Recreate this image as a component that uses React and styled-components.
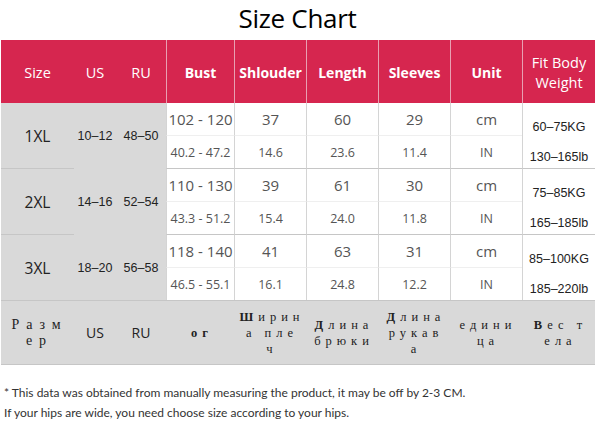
import React from "react";
import styled, { createGlobalStyle } from "styled-components";

const GlobalStyle = createGlobalStyle`
  html, body {
    margin: 0;
    padding: 0;
    background: #ffffff;
  }
`;

const Page = styled.div`
  width: 595px;
  height: 426px;
  overflow: hidden;
  font-family: "Open Sans", "Noto Sans", sans-serif;
`;

const Title = styled.h1`
  margin: 0;
  height: 40px;
  line-height: 36px;
  text-align: center;
  font-size: 26px;
  font-weight: 400;
  color: #000;
  letter-spacing: -0.3px;
`;

const Table = styled.div`
  display: grid;
  margin-left: 1px;
  grid-template-columns: 73px 42px 50px 68px 72px 72px 72px 72px 73px;
  grid-template-rows: 63px repeat(6, 33px) 64px;
`;

const Head = styled.div`
  background: #d6264f;
  color: #fff;
  display: flex;
  align-items: center;
  justify-content: center;
  text-align: center;
  font-size: ${(p) => (p.bold ? "14px" : "14.5px")};
  font-weight: ${(p) => (p.bold ? 700 : 400)};
  line-height: 20px;
  border-left: ${(p) => (p.line ? "1px solid #e8a0b2" : "none")};
  padding-top: 2px;
`;

const SizeCell = styled.div`
  background: #d9d9d9;
  display: flex;
  align-items: center;
  justify-content: center;
  color: #222;
  font-size: ${(p) => (p.big ? "15.5px" : "12.5px")};
  border-bottom: ${(p) => (p.line ? "1px solid #c6c6c6" : "none")};
  font-family: ${(p) => (p.big ? '"Open Sans", sans-serif' : '"Liberation Sans", Arial, sans-serif')};
`;

const Cell = styled.div`
  display: flex;
  align-items: center;
  justify-content: center;
  color: #555;
  font-size: ${(p) => (p.small ? "12.5px" : "15px")};
  border-left: 1px solid #d4d4d4;
  border-bottom: 1px solid ${(p) => (p.end ? "#c6c6c6" : "#efefef")};
  background: #fff;
`;

const WeightCell = styled.div`
  display: flex;
  flex-direction: column;
  justify-content: space-between;
  align-items: center;
  padding: 17px 0 4px;
  border-left: 1px solid #d4d4d4;
  border-bottom: 1px solid #c6c6c6;
  font-family: "Liberation Sans", Arial, sans-serif;
  font-size: 12.5px;
  color: #222;
  background: #fff;
`;

const RuCell = styled.div`
  background: #d9d9d9;
  display: flex;
  flex-direction: column;
  align-items: center;
  justify-content: center;
  color: #222;
  border-bottom: 1px solid #c6c6c6;
  border-top: 1px solid #c6c6c6;
  margin-top: -1px;
  padding-left: ${(p) => (p.plain ? "0" : "4px")};
`;

const RuLine = styled.span`
  display: block;
  white-space: pre;
  text-align: center;
  font-family: ${(p) => (p.plain ? '"Open Sans", sans-serif' : '"Liberation Serif", "DejaVu Serif", serif')};
  font-size: ${(p) => (p.plain ? "14px" : p.big ? "14px" : "12.5px")};
  letter-spacing: ${(p) => (p.plain ? "0" : p.big ? "7px" : "5px")};
  line-height: 16px;
  font-weight: ${(p) => (p.bold ? 700 : 400)};
`;

const Notes = styled.div`
  padding: 18px 0 0 4px;
  font-family: Lato, "Open Sans", sans-serif;
  font-size: 12px;
  color: #333;
  line-height: 20px;
`;

const headers = [
  { t: "Size" },
  { t: "US" },
  { t: "RU" },
  { t: "Bust", bold: true, line: true },
  { t: "Shlouder", bold: true, line: true },
  { t: "Length", bold: true, line: true },
  { t: "Sleeves", bold: true, line: true },
  { t: "Unit", bold: true, line: true },
  { t: "Fit Body Weight", line: true },
];

const rows = [
  {
    size: "1XL", us: "10–12", ru: "48–50",
    cm: ["102 - 120", "37", "60", "29"],
    inch: ["40.2 - 47.2", "14.6", "23.6", "11.4"],
    kg: "60–75KG", lb: "130–165lb",
  },
  {
    size: "2XL", us: "14–16", ru: "52–54",
    cm: ["110 - 130", "39", "61", "30"],
    inch: ["43.3 - 51.2", "15.4", "24.0", "11.8"],
    kg: "75–85KG", lb: "165–185lb",
  },
  {
    size: "3XL", us: "18–20", ru: "56–58",
    cm: ["118 - 140", "41", "63", "31"],
    inch: ["46.5 - 55.1", "16.1", "24.8", "12.2"],
    kg: "85–100KG", lb: "185–220lb",
  },
];

// russian labels, wrapped the same way as in the chart image
const ruLabels = [
  { lines: ["Разм", "ер"], big: true },
  { lines: ["US"], plain: true },
  { lines: ["RU"], plain: true },
  { lines: ["ог"], bold: true },
  { lines: ["Ширин", "а пле", "ч"], cap: true },
  { lines: ["Длина", "брюки"], cap: true },
  { lines: ["Длина", "рукав", "а"], cap: true },
  { lines: ["едини", "ца"] },
  { lines: ["Вес т", "ела"], cap: true },
];

export default function App() {
  return (
    <Page>
      <GlobalStyle />
      <Title>Size Chart</Title>
      <Table>
        {headers.map((h) => (
          <Head key={h.t} bold={h.bold} line={h.line}>
            {h.t === "Fit Body Weight" ? (
              <span>
                Fit Body
                <br />
                Weight
              </span>
            ) : (
              h.t
            )}
          </Head>
        ))}

        {rows.map((r, i) => (
          <React.Fragment key={r.size}>
            <SizeCell big line={i < 2} style={{ gridRow: `${2 + i * 2} / span 2`, gridColumn: 1 }}>
              {r.size}
            </SizeCell>
            <SizeCell style={{ gridRow: `${2 + i * 2} / span 2`, gridColumn: 2 }}>{r.us}</SizeCell>
            <SizeCell style={{ gridRow: `${2 + i * 2} / span 2`, gridColumn: 3 }}>{r.ru}</SizeCell>
            {r.cm.map((v, j) => (
              <Cell key={"c" + j} style={{ gridRow: 2 + i * 2, gridColumn: 4 + j }}>
                {v}
              </Cell>
            ))}
            <Cell style={{ gridRow: 2 + i * 2, gridColumn: 8 }}>cm</Cell>
            {r.inch.map((v, j) => (
              <Cell key={"i" + j} small end style={{ gridRow: 3 + i * 2, gridColumn: 4 + j }}>
                {v}
              </Cell>
            ))}
            <Cell small end style={{ gridRow: 3 + i * 2, gridColumn: 8 }}>IN</Cell>
            <WeightCell style={{ gridRow: `${2 + i * 2} / span 2`, gridColumn: 9 }}>
              <span>{r.kg}</span>
              <span>{r.lb}</span>
            </WeightCell>
          </React.Fragment>
        ))}

        {ruLabels.map((l, i) => (
          <RuCell key={i} plain={l.plain}>
            {l.lines.map((line, k) =>
              l.cap && k === 0 ? (
                <RuLine key={k}>
                  <b>{line[0]}</b>
                  {line.slice(1)}
                </RuLine>
              ) : (
                <RuLine key={k} big={l.big} plain={l.plain} bold={l.bold}>
                  {line}
                </RuLine>
              )
            )}
          </RuCell>
        ))}
      </Table>
      <Notes>
        * This data was obtained from manually measuring the product, it may be off by 2-3 CM.
        <br />
        If your hips are wide, you need choose size according to your hips.
      </Notes>
    </Page>
  );
}
